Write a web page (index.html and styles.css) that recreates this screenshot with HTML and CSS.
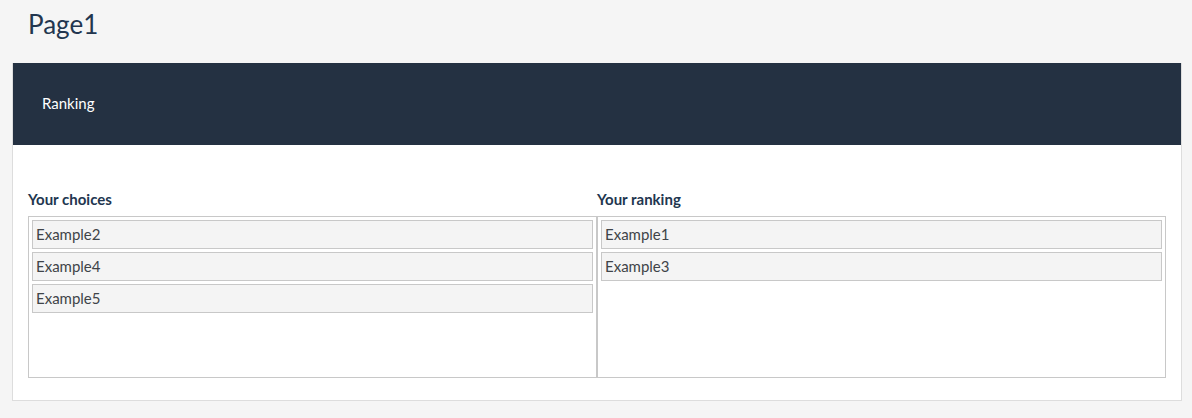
FILE: index.html
```html
<!DOCTYPE html>
<html lang="en">
<head>
    <meta charset="UTF-8">
    <title>Page1</title>
    <link rel="stylesheet" href="styles.css">
</head>
<body>
    <h1 class="page-title">Page1</h1>

    <div class="panel">
        <div class="panel-heading">Ranking</div>
        <div class="panel-body">
            <div class="ranking">
                <div class="rank-col">
                    <div class="rank-label">Your choices</div>
                    <div class="rank-list">
                        <div class="rank-item">Example2</div>
                        <div class="rank-item">Example4</div>
                        <div class="rank-item">Example5</div>
                    </div>
                </div>
                <div class="rank-col">
                    <div class="rank-label">Your ranking</div>
                    <div class="rank-list">
                        <div class="rank-item">Example1</div>
                        <div class="rank-item">Example3</div>
                    </div>
                </div>
            </div>
        </div>
    </div>
</body>
</html>
```

FILE: styles.css
```css
* {
    margin: 0;
    padding: 0;
    box-sizing: border-box;
}

body {
    background-color: #f5f5f5;
    font-family: Lato, "Open Sans", sans-serif;
    color: #404040;
    padding: 0 10px 0 12px;
}

.page-title {
    font-size: 26px;
    font-weight: 400;
    color: #22364f;
    padding: 8px 0 0 16px;
    height: 63px;
}

.panel {
    background-color: white;
    border: 1px solid #dddddd;
    border-top: none;
}

.panel-heading {
    background-color: #243142;
    color: white;
    font-size: 15px;
    height: 82px;
    display: flex;
    align-items: center;
    padding: 0 0 2px 29px;
}

.panel-body {
    padding: 46px 15px 22px 15px;
}

.ranking {
    display: flex;
}

.rank-col {
    flex: 1;
}

.rank-label {
    font-size: 15px;
    font-weight: 700;
    line-height: 16px;
    color: #22364f;
    height: 25px;
}

.rank-list {
    border: 1px solid #c8c8c8;
    height: 162px;
    padding: 3px;
    display: flex;
    flex-direction: column;
    gap: 3px;
}

.rank-item {
    background-color: #f4f4f4;
    border: 1px solid #c8c8c8;
    height: 29px;
    font-size: 15px;
    padding: 4px 0 0 3px;
    color: #3f4448;
}
```
